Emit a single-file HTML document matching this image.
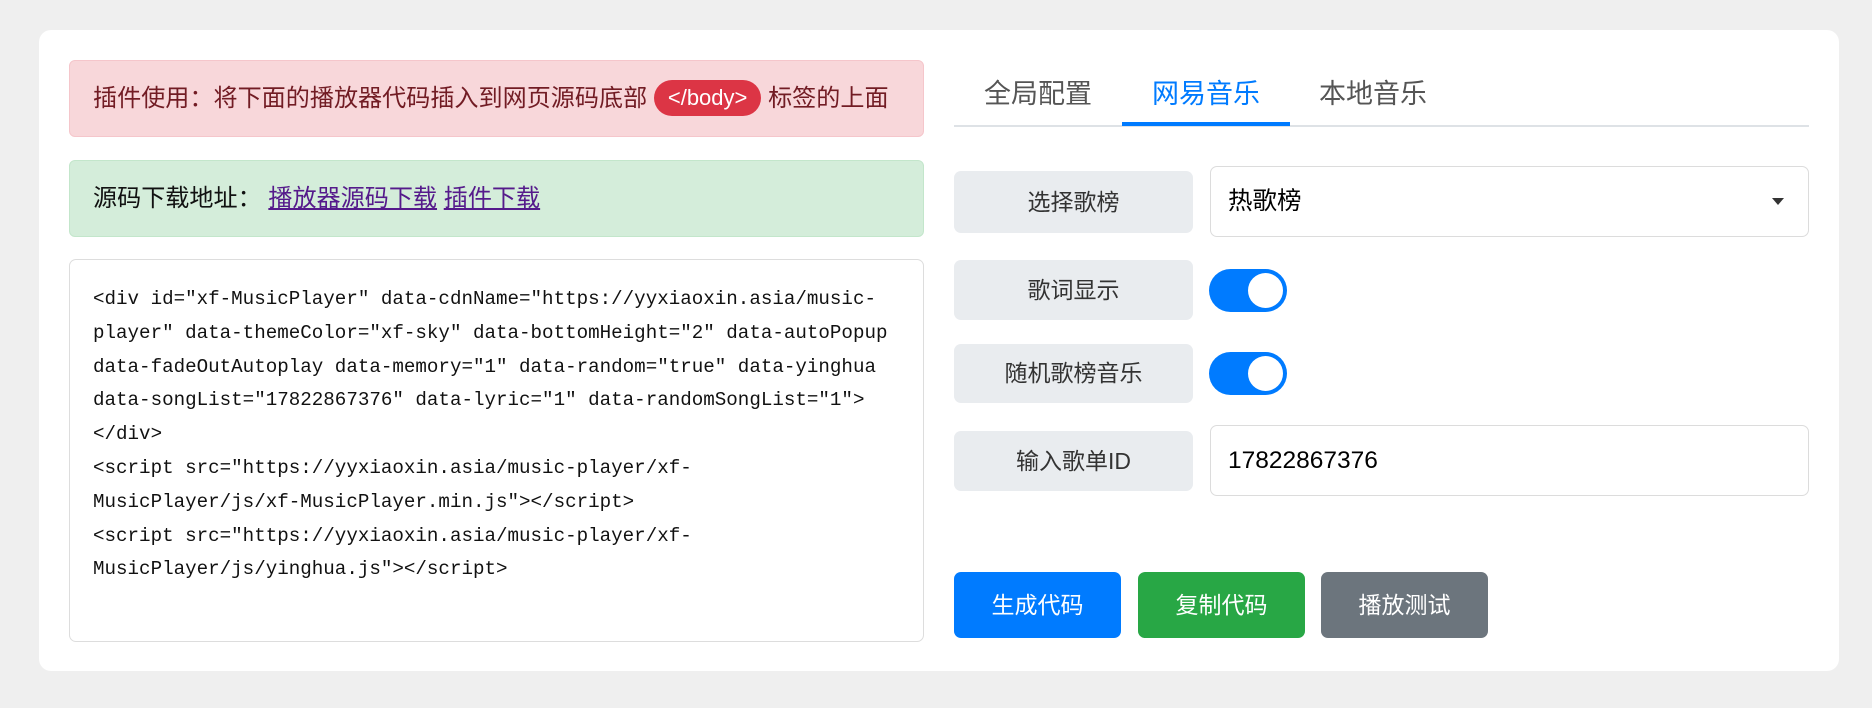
<!DOCTYPE html>
<html><head><meta charset="utf-8"><style>
*{box-sizing:border-box;margin:0;padding:0}
body{width:1872px;height:708px;background:#efefef;font-family:"Liberation Sans","Noto Sans CJK SC",sans-serif;position:relative;overflow:hidden}
.card{position:absolute;left:39px;top:30px;width:1800px;height:641px;background:#fff;border-radius:12px}
.a{position:absolute}
.alert1{left:69px;top:60px;width:855px;height:77px;background:#f8d7da;border:1px solid #f5c6cb;border-radius:6px;color:#721c24;font-size:24.1px;line-height:75px;padding-left:23px;white-space:nowrap}
.badge{display:inline-block;background:#dc3545;color:#fff;border-radius:18px;padding:0 14px;line-height:36px;font-size:22px;vertical-align:1px}
.alert2{left:69px;top:160px;width:855px;height:77px;background:#d4edda;border:1px solid #c3e6cb;border-radius:6px;color:#111;font-size:24.1px;line-height:75px;padding-left:23px;white-space:nowrap}
.alert2 a{color:#551a8b;text-decoration:underline}
.code{left:69px;top:259px;width:855px;height:383px;border:1px solid #ddd;border-radius:7px;padding:23px 23px;font-family:"Liberation Mono","DejaVu Sans Mono",monospace;font-size:19.2px;line-height:33.8px;color:#111;white-space:pre}
.tab{top:72px;font-size:27px;color:#555}
.tabline{left:954px;top:125px;width:855px;height:2px;background:#dee2e6}
.tabact{left:1122px;top:122px;width:168px;height:4px;background:#007bff}
.lbl{left:954px;width:239px;background:#e9ecef;border-radius:7px;text-align:center;font-size:23px;color:#333}
.inp{left:1210px;width:599px;border:1px solid #dcdcdc;border-radius:7px;font-size:24.5px;color:#000;padding-left:17px}
.tog{left:1209px;width:78px;height:43px;background:#007bff;border-radius:22px}
.tog:after{content:"";position:absolute;right:4px;top:4px;width:35px;height:35px;border-radius:50%;background:#fff}
.btn{top:572px;width:167px;height:66px;border-radius:7px;color:#fff;font-size:23px;text-align:center;line-height:66px}
</style></head><body>
<div class="card"></div>
<div class="a alert1">插件使用：将下面的播放器代码插入到网页源码底部 <span class="badge">&lt;/body&gt;</span> 标签的上面</div>
<div class="a alert2">源码下载地址： <a>播放器源码下载</a> <a>插件下载</a></div>
<div class="a code">&lt;div id="xf-MusicPlayer" data-cdnName="https://yyxiaoxin.asia/music-
player" data-themeColor="xf-sky" data-bottomHeight="2" data-autoPopup
data-fadeOutAutoplay data-memory="1" data-random="true" data-yinghua
data-songList="17822867376" data-lyric="1" data-randomSongList="1"&gt;
&lt;/div&gt;
&lt;script src="https://yyxiaoxin.asia/music-player/xf-
MusicPlayer/js/xf-MusicPlayer.min.js"&gt;&lt;/script&gt;
&lt;script src="https://yyxiaoxin.asia/music-player/xf-
MusicPlayer/js/yinghua.js"&gt;&lt;/script&gt;</div>
<div class="a tab" style="left:984px">全局配置</div>
<div class="a tab" style="left:1152px;color:#007bff">网易音乐</div>
<div class="a tab" style="left:1319px">本地音乐</div>
<div class="a tabline"></div><div class="a tabact"></div>
<div class="a lbl" style="top:171px;height:62px;line-height:62px">选择歌榜</div>
<div class="a inp" style="top:166px;height:71px;line-height:69px">热歌榜<span style="position:absolute;right:24px;top:31px;border-left:6px solid transparent;border-right:6px solid transparent;border-top:7px solid #333"></span></div>
<div class="a lbl" style="top:260px;height:60px;line-height:60px">歌词显示</div>
<div class="a tog" style="top:269px"></div>
<div class="a lbl" style="top:344px;height:59px;line-height:59px">随机歌榜音乐</div>
<div class="a tog" style="top:352px"></div>
<div class="a lbl" style="top:431px;height:60px;line-height:60px">输入歌单ID</div>
<div class="a inp" style="top:425px;height:71px;line-height:69px">17822867376</div>
<div class="a btn" style="left:954px;background:#007bff">生成代码</div>
<div class="a btn" style="left:1138px;background:#28a745">复制代码</div>
<div class="a btn" style="left:1321px;background:#6c757d">播放测试</div>
</body></html>
